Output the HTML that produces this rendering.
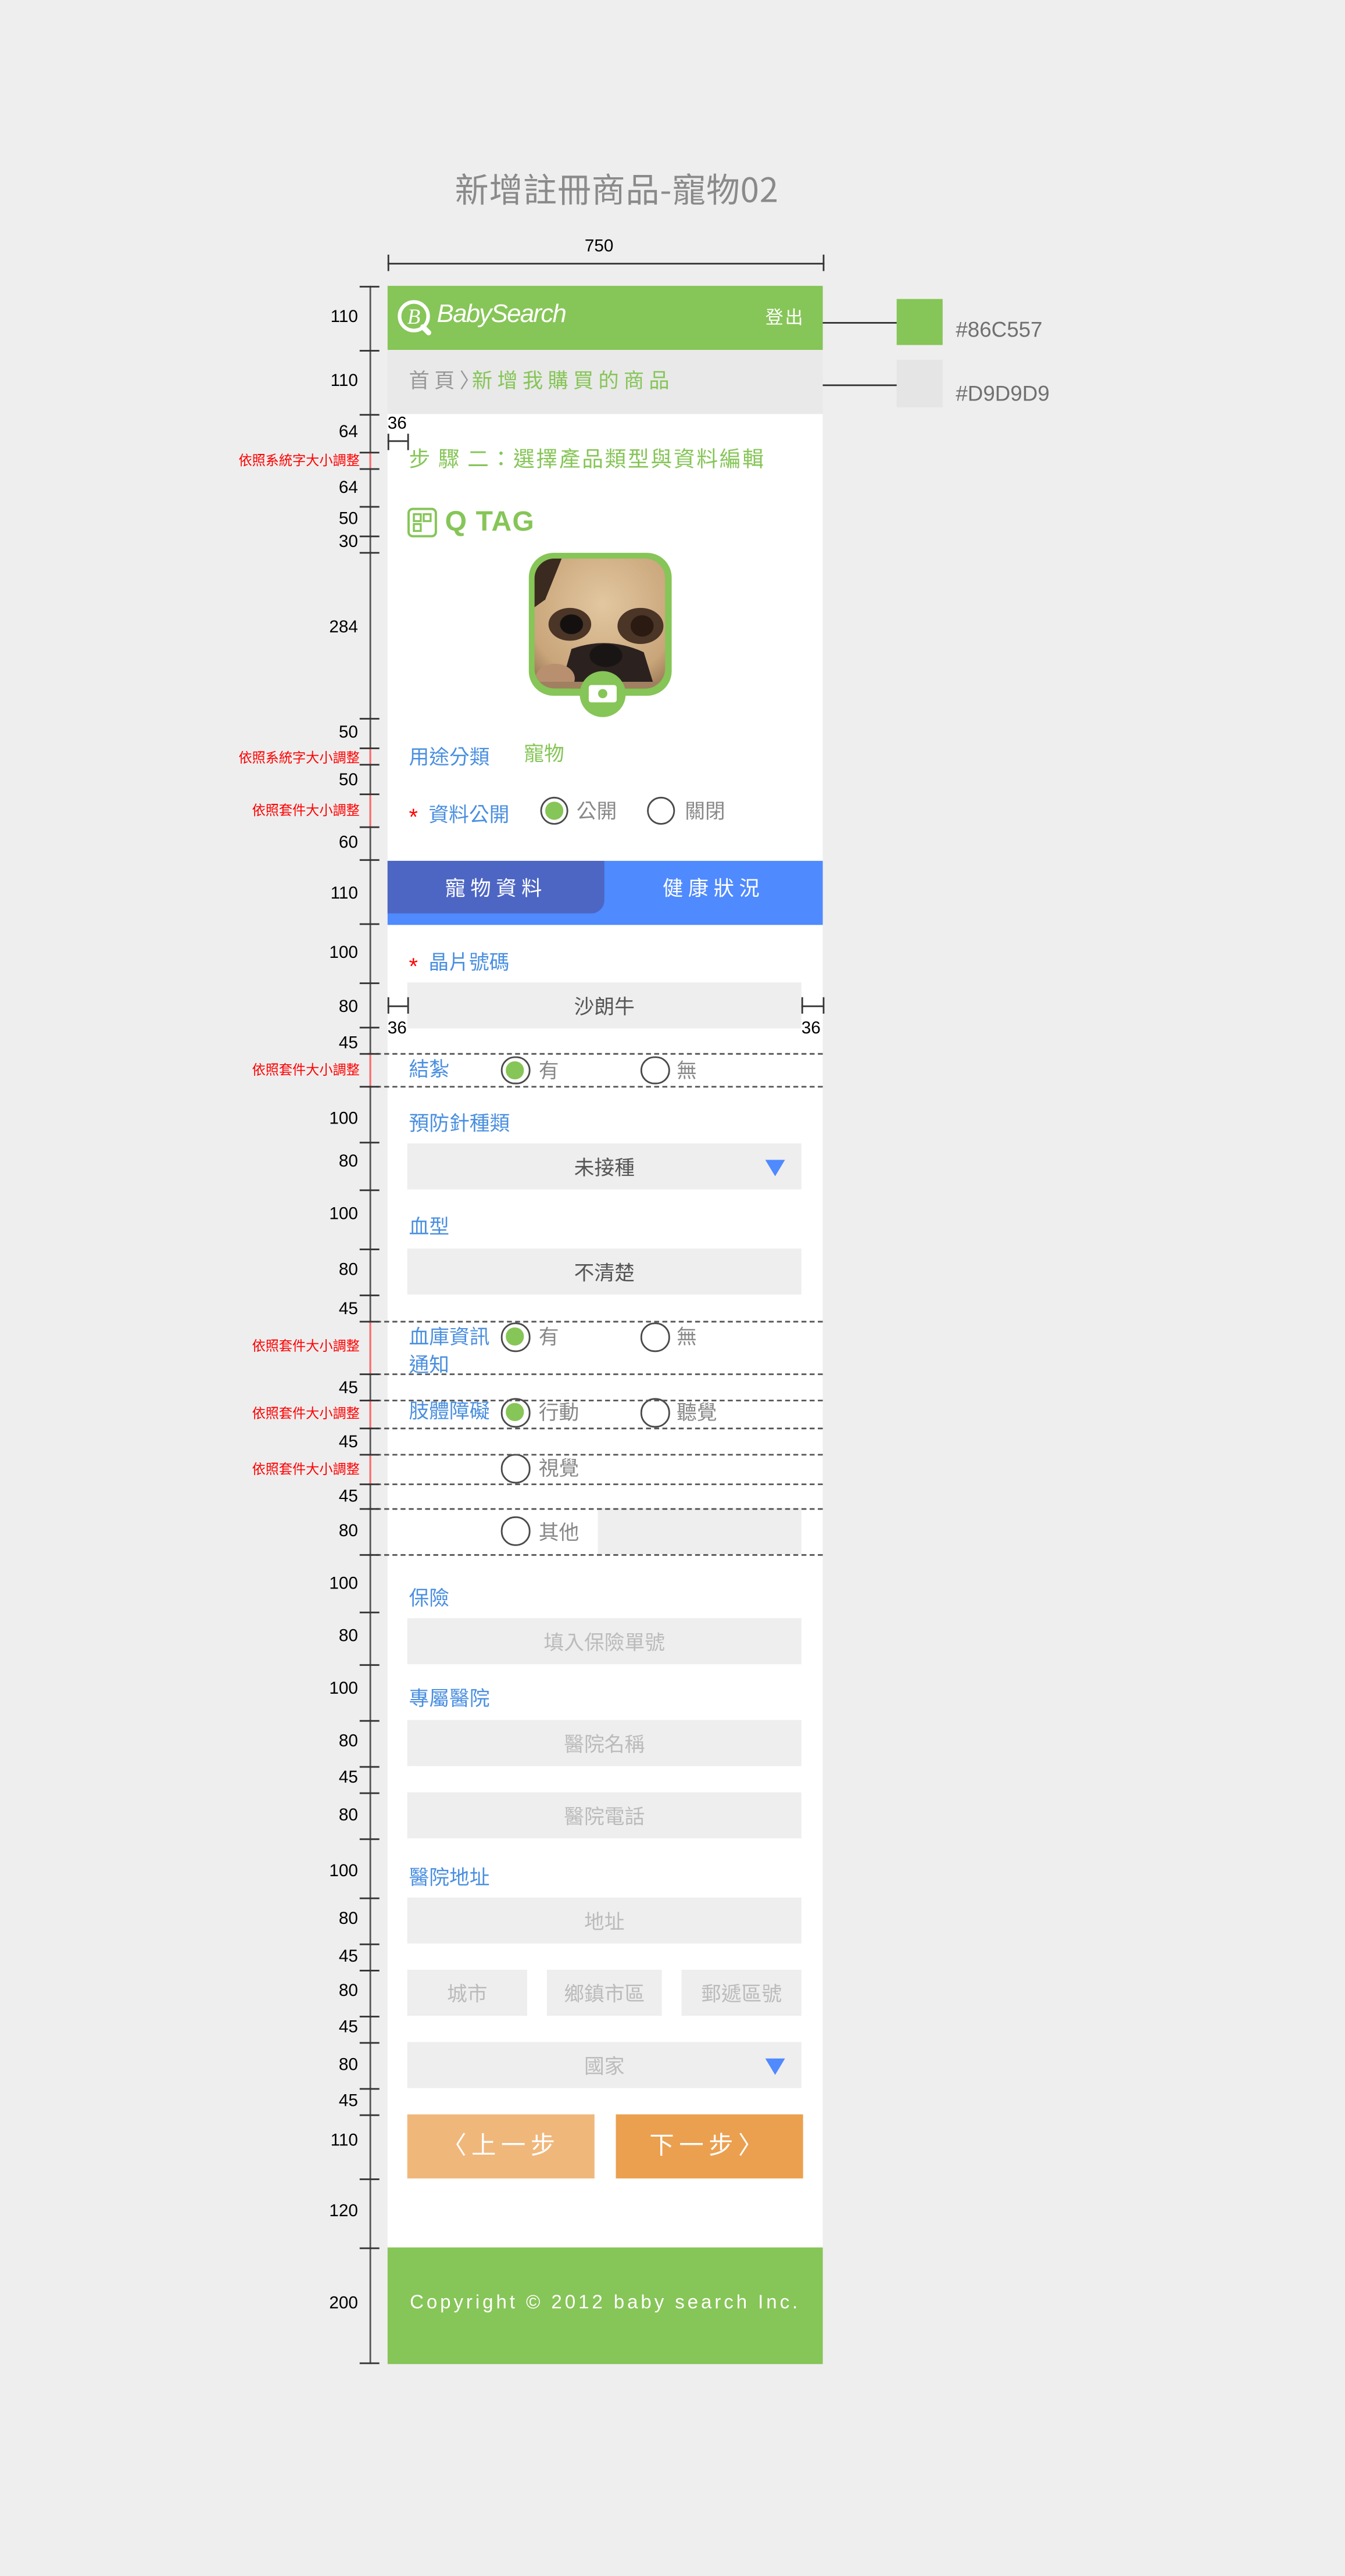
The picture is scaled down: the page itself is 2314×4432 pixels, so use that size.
<!DOCTYPE html>
<html><head><meta charset="utf-8">
<style>
html,body{margin:0;padding:0;}
body{width:2314px;height:4432px;overflow:hidden;background:#EEEEEE;}
#w{position:absolute;left:0;top:0;width:819px;height:1568px;transform-origin:0 0;transform:scale(2.82540,2.82653);font-family:"Liberation Sans","Noto Sans CJK TC",sans-serif;}
.a{position:absolute;white-space:nowrap;line-height:1;}
.n{position:absolute;right:601px;font-family:"Liberation Sans Narrow","Liberation Sans",sans-serif;font-size:10.5px;color:#000;line-height:1;white-space:nowrap;}
.r{position:absolute;right:600px;font-family:"Noto Sans CJK TC",sans-serif;font-size:8.2px;color:#f00;line-height:1;white-space:nowrap;}
.t{position:absolute;left:219px;width:12px;height:0;border-top:1px solid #333;}
.d{position:absolute;left:224px;width:277px;height:0;border-top:0.6px dashed #555;}
.lab{position:absolute;left:249px;font-size:12.3px;color:#4A8FE0;line-height:1;white-space:nowrap;font-family:"Liberation Sans","Noto Sans CJK TC",sans-serif;}
.in{position:absolute;background:#EEEEEE;font-size:12.3px;color:#555;text-align:center;font-family:"Noto Sans CJK TC",sans-serif;}
.ph{color:#BBBBBB;}
.rd{position:absolute;width:15.5px;height:15.5px;border:1.6px solid #4a4a4a;border-radius:50%;box-sizing:content-box;}
.rd.on::after{content:"";position:absolute;left:2.4px;top:2.4px;width:10.7px;height:10.7px;border-radius:50%;background:#86C557;}
.rt{position:absolute;font-size:12.3px;color:#888;line-height:1;white-space:nowrap;font-family:"Noto Sans CJK TC",sans-serif;}
.tri{position:absolute;width:0;height:0;border-left:6px solid transparent;border-right:6px solid transparent;border-top:10px solid #4F8AFE;}
.red{position:absolute;left:225px;width:0;border-left:0.8px solid #f66;}
</style></head><body><div id="w">

<div class="a" style="left:277px;top:104px;font-size:20.5px;color:#8a8a8a;font-family:'Noto Sans CJK TC',sans-serif;letter-spacing:0.3px;">新增註冊商品-寵物02</div>
<div class="a" style="left:356px;top:145px;font-size:10.5px;color:#000;font-family:'Liberation Sans Narrow','Liberation Sans',sans-serif;">750</div>
<div class="a" style="left:236px;top:160px;width:266px;border-top:1px solid #333;"></div>
<div class="a" style="left:236px;top:155px;height:10px;border-left:1px solid #333;"></div>
<div class="a" style="left:501px;top:155px;height:10px;border-left:1px solid #333;"></div>

<div class="a" style="left:545.8px;top:181.6px;width:28.3px;height:28.4px;background:#86C557;"></div>
<div class="a" style="left:545.8px;top:219.4px;width:28.3px;height:28.3px;background:#E5E5E5;"></div>
<div class="a" style="left:497px;top:195.6px;width:49px;border-top:0.7px solid #333;"></div>
<div class="a" style="left:497px;top:233.6px;width:49px;border-top:0.7px solid #333;"></div>
<div class="a" style="left:582px;top:194px;font-size:13px;color:#707070;">#86C557</div>
<div class="a" style="left:582px;top:233px;font-size:13px;color:#707070;">#D9D9D9</div>

<div class="a" style="left:236px;top:251px;width:265px;height:1117px;background:#fff;"></div>
<div class="a" style="left:236px;top:174px;width:265px;height:39px;background:#86C557;"></div>
<div class="a" style="left:236px;top:213px;width:265px;height:38.5px;background:#E9E9E9;"></div>
<div class="a" style="left:236px;top:1368px;width:265px;height:71px;background:#86C557;"></div>

<svg class="a" style="left:241px;top:182px;" width="25" height="24" viewBox="0 0 25 24">
<circle cx="11" cy="10.5" r="8.7" fill="none" stroke="#fff" stroke-width="2.2"/>
<path d="M16.5 17 L20 20.5" stroke="#fff" stroke-width="3.2" stroke-linecap="round"/>
<text x="11" y="15" text-anchor="middle" font-family="Liberation Serif,serif" font-style="italic" font-size="13" fill="#fff">B</text>
</svg>
<div class="a" style="left:266px;top:184px;font-size:15.5px;color:#fff;font-style:italic;letter-spacing:-0.6px;">BabySearch</div>
<div class="a" style="left:466px;top:188px;font-size:11px;color:#fff;font-family:'Noto Sans CJK TC',sans-serif;letter-spacing:1px;">登出</div>

<div class="a" style="left:249px;top:225px;font-size:12.5px;letter-spacing:2.9px;font-family:'Noto Sans CJK TC',sans-serif;color:#999;">首頁<span style="letter-spacing:0">〉</span><span style="color:#86C557;margin-left:-5px;">新增我購買的商品</span></div>

<div class="a" style="left:236px;top:253px;font-size:10.5px;font-family:'Liberation Sans Narrow','Liberation Sans',sans-serif;color:#000;">36</div>
<div class="a" style="left:236px;top:264px;height:10px;border-left:0.7px solid #333;"></div>
<div class="a" style="left:248px;top:264px;height:10px;border-left:0.7px solid #333;"></div>
<div class="a" style="left:236px;top:268px;width:12px;border-top:0.7px solid #333;"></div>

<div class="a" style="left:249px;top:272px;font-size:13px;color:#86C557;font-family:'Noto Sans CJK TC',sans-serif;letter-spacing:0.95px;">步 驟 二：選擇產品類型與資料編輯</div>

<svg class="a" style="left:248px;top:308.5px;" width="19" height="19" viewBox="0 0 19 19">
<rect x="0.8" y="0.8" width="16.6" height="16.6" rx="2.5" fill="none" stroke="#86C557" stroke-width="1.4"/>
<rect x="4" y="4" width="4.2" height="4.2" fill="none" stroke="#86C557" stroke-width="1.2"/>
<rect x="10" y="4" width="4.2" height="4.2" fill="none" stroke="#86C557" stroke-width="1.2"/>
<rect x="4" y="10" width="4.2" height="4.2" fill="none" stroke="#86C557" stroke-width="1.2"/>
</svg>
<div class="a" style="left:271px;top:309px;font-size:17px;font-weight:bold;color:#86C557;letter-spacing:0.4px;">Q TAG</div>

<svg class="a" style="left:320px;top:335px;" width="94" height="104" viewBox="0 0 94 104">
<defs><clipPath id="c"><rect x="5.5" y="5" width="79.5" height="79" rx="12"/></clipPath>
<radialGradient id="g" cx="0.5" cy="0.35" r="0.7"><stop offset="0" stop-color="#e2c7a0"/><stop offset="0.7" stop-color="#c9a57a"/><stop offset="1" stop-color="#8a6a4a"/></radialGradient></defs>
<rect x="2" y="1.5" width="87" height="87" rx="15" fill="#86C557"/>
<g clip-path="url(#c)">
<rect x="0" y="0" width="94" height="94" fill="url(#g)"/>
<path d="M5 5 L22 5 L12 30 L5 35Z" fill="#3a2a20"/>
<ellipse cx="27" cy="45" rx="13" ry="10" fill="#4a3526"/>
<ellipse cx="70" cy="46" rx="14" ry="11" fill="#4a3526"/>
<ellipse cx="28" cy="45" rx="7" ry="6" fill="#151010"/>
<ellipse cx="71" cy="46" rx="7" ry="6.5" fill="#2a1a12"/>
<path d="M28 60 Q50 52 72 62 L80 88 L20 88Z" fill="#2b2220"/>
<ellipse cx="49" cy="64" rx="10" ry="7" fill="#1a1515"/>
<ellipse cx="18" cy="78" rx="12" ry="9" fill="#b89070"/>
<rect x="5" y="80" width="80" height="6" fill="#a08060"/>
</g>
<circle cx="47" cy="87.5" r="14" fill="#86C557"/>
<rect x="38.5" y="82" width="17" height="10.5" rx="1.5" fill="#fff"/>
<circle cx="47" cy="87.2" r="2.8" fill="#86C557"/>
</svg>

<div class="lab" style="top:455px;">用途分類</div>
<div class="a" style="left:319px;top:452px;font-size:12.3px;color:#86C557;font-family:'Noto Sans CJK TC',sans-serif;">寵物</div>

<div class="a" style="left:249px;top:490px;font-size:14px;color:#f00;">*</div>
<div class="lab" style="left:261px;top:489.5px;">資料公開</div>
<div class="rd on" style="left:328.7px;top:484.7px;"></div>
<div class="rt" style="left:351px;top:487px;">公開</div>
<div class="rd" style="left:393.7px;top:484.7px;"></div>
<div class="rt" style="left:417px;top:487px;">關閉</div>

<div class="a" style="left:236px;top:523.7px;width:265px;height:39px;background:#4F8AFE;"></div>
<div class="a" style="left:236px;top:523.7px;width:132px;height:32px;background:#4D66C4;border-bottom-right-radius:8px;"></div>
<div class="a" style="left:236px;top:534px;width:132px;text-align:center;font-size:12.5px;color:#fff;letter-spacing:3px;font-family:'Noto Sans CJK TC',sans-serif;">寵物資料</div>
<div class="a" style="left:368px;top:534px;width:133px;text-align:center;font-size:12.5px;color:#fff;letter-spacing:3px;font-family:'Noto Sans CJK TC',sans-serif;">健康狀況</div>

<div class="a" style="left:249px;top:581px;font-size:14px;color:#f00;">*</div>
<div class="lab" style="left:261px;top:580px;">晶片號碼</div>
<div class="in" style="left:248px;top:598px;width:240px;height:28px;line-height:28px;">沙朗牛</div>
<div class="a" style="left:236px;top:607px;height:10px;border-left:0.7px solid #333;"></div>
<div class="a" style="left:236px;top:612px;width:12px;border-top:0.7px solid #333;"></div>
<div class="a" style="left:248px;top:607px;height:10px;border-left:0.7px solid #333;"></div>
<div class="a" style="left:488px;top:607px;height:10px;border-left:0.7px solid #333;"></div>
<div class="a" style="left:488px;top:612px;width:13px;border-top:0.7px solid #333;"></div>
<div class="a" style="left:500.5px;top:607px;height:10px;border-left:0.7px solid #333;"></div>
<div class="a" style="left:236px;top:621px;font-size:10.5px;font-family:'Liberation Sans Narrow','Liberation Sans',sans-serif;">36</div>
<div class="a" style="left:488px;top:621px;font-size:10.5px;font-family:'Liberation Sans Narrow','Liberation Sans',sans-serif;">36</div>

<div class="lab" style="top:645px;">結紮</div>
<div class="rd on" style="left:305px;top:642.5px;"></div>
<div class="rt" style="left:328px;top:645px;">有</div>
<div class="rd" style="left:390px;top:642.5px;"></div>
<div class="rt" style="left:412px;top:645px;">無</div>

<div class="lab" style="top:678px;">預防針種類</div>
<div class="in" style="left:248px;top:696px;width:240px;height:28px;line-height:28px;">未接種</div>
<div class="tri" style="left:466px;top:706px;"></div>

<div class="lab" style="top:741px;">血型</div>
<div class="in" style="left:248px;top:760px;width:240px;height:28px;line-height:28px;">不清楚</div>

<div class="lab" style="top:808px;">血庫資訊</div>
<div class="lab" style="top:825px;">通知</div>
<div class="rd on" style="left:305px;top:805px;"></div>
<div class="rt" style="left:328px;top:807px;">有</div>
<div class="rd" style="left:390px;top:805px;"></div>
<div class="rt" style="left:412px;top:807px;">無</div>

<div class="lab" style="top:853px;">肢體障礙</div>
<div class="rd on" style="left:305px;top:851px;"></div>
<div class="rt" style="left:328px;top:853px;">行動</div>
<div class="rd" style="left:390px;top:851px;"></div>
<div class="rt" style="left:412px;top:853px;">聽覺</div>

<div class="rd" style="left:305px;top:885px;"></div>
<div class="rt" style="left:328px;top:887px;">視覺</div>

<div class="rd" style="left:305px;top:923px;"></div>
<div class="rt" style="left:328px;top:926px;">其他</div>
<div class="in" style="left:364px;top:918px;width:124px;height:28px;"></div>

<div class="d" style="top:641px;"></div>
<div class="d" style="top:661px;"></div>
<div class="d" style="top:804px;"></div>
<div class="d" style="top:836px;"></div>
<div class="d" style="top:852px;"></div>
<div class="d" style="top:869px;"></div>
<div class="d" style="top:885px;"></div>
<div class="d" style="top:903px;"></div>
<div class="d" style="top:918px;"></div>
<div class="d" style="top:946px;"></div>

<div class="lab" style="top:967px;">保險</div>
<div class="in ph" style="left:248px;top:985px;width:240px;height:28px;line-height:28px;">填入保險單號</div>
<div class="lab" style="top:1028px;">專屬醫院</div>
<div class="in ph" style="left:248px;top:1047px;width:240px;height:28px;line-height:28px;">醫院名稱</div>
<div class="in ph" style="left:248px;top:1091px;width:240px;height:28px;line-height:28px;">醫院電話</div>
<div class="lab" style="top:1137px;">醫院地址</div>
<div class="in ph" style="left:248px;top:1155px;width:240px;height:28px;line-height:28px;">地址</div>
<div class="in ph" style="left:248px;top:1199px;width:73px;height:28px;line-height:28px;">城市</div>
<div class="in ph" style="left:333px;top:1199px;width:70px;height:28px;line-height:28px;">鄉鎮市區</div>
<div class="in ph" style="left:415px;top:1199px;width:73px;height:28px;line-height:28px;">郵遞區號</div>
<div class="in ph" style="left:248px;top:1243px;width:240px;height:28px;line-height:28px;">國家</div>
<div class="tri" style="left:466px;top:1253px;"></div>

<div class="a" style="left:248.3px;top:1287px;width:113.5px;height:38.7px;background:#F0B77B;color:#fff;font-size:15px;text-align:center;line-height:38.7px;letter-spacing:3px;font-family:'Noto Sans CJK TC',sans-serif;">〈上一步</div>
<div class="a" style="left:374.5px;top:1287px;width:114px;height:38.7px;background:#EBA04F;color:#fff;font-size:15px;text-align:center;line-height:38.7px;letter-spacing:3px;font-family:'Noto Sans CJK TC',sans-serif;">下一步〉</div>

<div class="a" style="left:236px;top:1396px;width:265px;text-align:center;font-size:11.7px;color:#fff;letter-spacing:1.75px;">Copyright © 2012 baby search Inc.</div>

<div class="a" style="left:224.7px;top:174px;height:1265px;border-left:0.8px solid #555;"></div>
<div class="red" style="top:274.6px;height:10.7px;"></div>
<div class="red" style="top:455px;height:10px;"></div>
<div class="red" style="top:483px;height:20px;"></div>
<div class="red" style="top:641px;height:20px;"></div>
<div class="red" style="top:804px;height:32px;"></div>
<div class="red" style="top:852px;height:17px;"></div>
<div class="red" style="top:885px;height:18px;"></div>

<div class="t" style="top:174px"></div><div class="t" style="top:213px"></div><div class="t" style="top:252px"></div>
<div class="t" style="top:274.6px"></div><div class="t" style="top:285.3px"></div><div class="t" style="top:308px"></div>
<div class="t" style="top:325.7px"></div><div class="t" style="top:336px"></div><div class="t" style="top:437px"></div>
<div class="t" style="top:455px"></div><div class="t" style="top:465px"></div><div class="t" style="top:483px"></div>
<div class="t" style="top:503px"></div><div class="t" style="top:523px"></div><div class="t" style="top:562px"></div>
<div class="t" style="top:598px"></div><div class="t" style="top:625px"></div><div class="t" style="top:641px"></div>
<div class="t" style="top:661px"></div><div class="t" style="top:695px"></div><div class="t" style="top:724px"></div>
<div class="t" style="top:760px"></div><div class="t" style="top:788px"></div><div class="t" style="top:804px"></div>
<div class="t" style="top:836px"></div><div class="t" style="top:852px"></div><div class="t" style="top:869px"></div>
<div class="t" style="top:885px"></div><div class="t" style="top:903px"></div><div class="t" style="top:918px"></div>
<div class="t" style="top:946px"></div><div class="t" style="top:981px"></div><div class="t" style="top:1013px"></div>
<div class="t" style="top:1047px"></div><div class="t" style="top:1075px"></div><div class="t" style="top:1091px"></div>
<div class="t" style="top:1119px"></div><div class="t" style="top:1155px"></div><div class="t" style="top:1183px"></div>
<div class="t" style="top:1199px"></div><div class="t" style="top:1227px"></div><div class="t" style="top:1243px"></div>
<div class="t" style="top:1271px"></div><div class="t" style="top:1287px"></div><div class="t" style="top:1326px"></div>
<div class="t" style="top:1368px"></div><div class="t" style="top:1438px"></div>

<div class="n" style="top:188px">110</div>
<div class="n" style="top:227px">110</div>
<div class="n" style="top:258px">64</div>
<div class="r" style="top:276px">依照系統字大小調整</div>
<div class="n" style="top:292px">64</div>
<div class="n" style="top:311px">50</div>
<div class="n" style="top:325px">30</div>
<div class="n" style="top:377px">284</div>
<div class="n" style="top:441px">50</div>
<div class="r" style="top:457px">依照系統字大小調整</div>
<div class="n" style="top:470px">50</div>
<div class="r" style="top:489px">依照套件大小調整</div>
<div class="n" style="top:508px">60</div>
<div class="n" style="top:539px">110</div>
<div class="n" style="top:575px">100</div>
<div class="n" style="top:608px">80</div>
<div class="n" style="top:630px">45</div>
<div class="r" style="top:647px">依照套件大小調整</div>
<div class="n" style="top:676px">100</div>
<div class="n" style="top:702px">80</div>
<div class="n" style="top:734px">100</div>
<div class="n" style="top:768px">80</div>
<div class="n" style="top:792px">45</div>
<div class="r" style="top:815px">依照套件大小調整</div>
<div class="n" style="top:840px">45</div>
<div class="r" style="top:856px">依照套件大小調整</div>
<div class="n" style="top:873px">45</div>
<div class="r" style="top:890px">依照套件大小調整</div>
<div class="n" style="top:906px">45</div>
<div class="n" style="top:927px">80</div>
<div class="n" style="top:959px">100</div>
<div class="n" style="top:991px">80</div>
<div class="n" style="top:1023px">100</div>
<div class="n" style="top:1055px">80</div>
<div class="n" style="top:1077px">45</div>
<div class="n" style="top:1100px">80</div>
<div class="n" style="top:1134px">100</div>
<div class="n" style="top:1163px">80</div>
<div class="n" style="top:1186px">45</div>
<div class="n" style="top:1207px">80</div>
<div class="n" style="top:1229px">45</div>
<div class="n" style="top:1252px">80</div>
<div class="n" style="top:1274px">45</div>
<div class="n" style="top:1298px">110</div>
<div class="n" style="top:1341px">120</div>
<div class="n" style="top:1397px">200</div>

</div></body></html>
